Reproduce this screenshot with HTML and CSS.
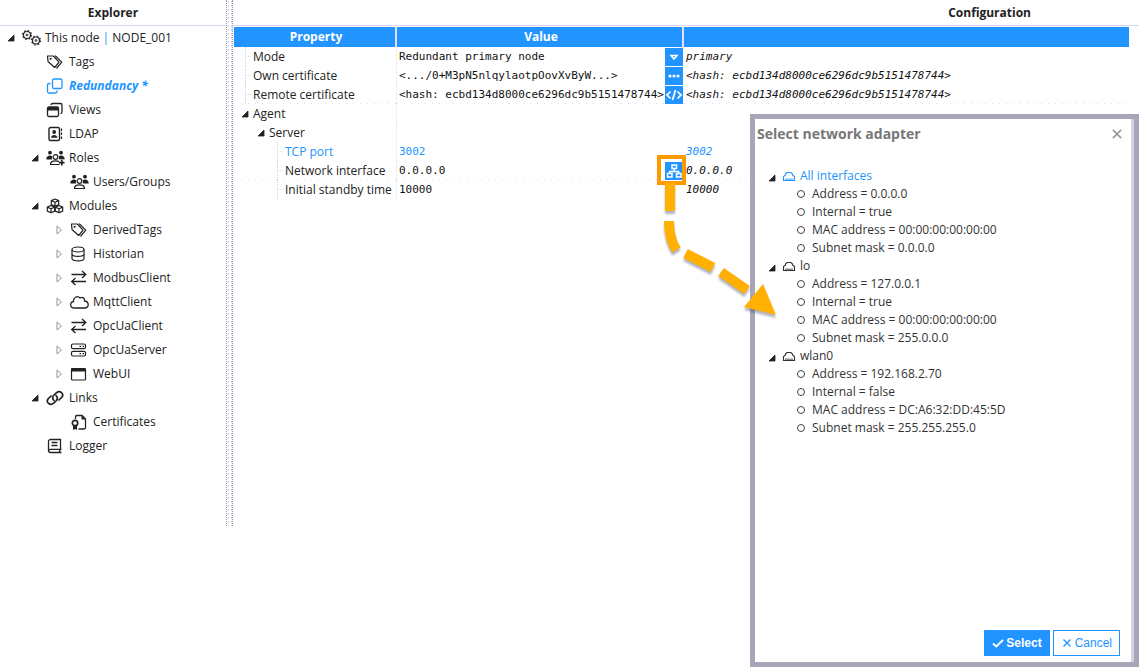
FILE: index.html
```html
<!DOCTYPE html>
<html lang="en">
<head>
<meta charset="utf-8">
<title>Configuration</title>
<link rel="stylesheet" href="styles.css">
</head>
<body>
<svg class="sprite" aria-hidden="true">
  <symbol id="open" viewBox="0 0 8 8"><path d="M7 1v6H1z" fill="#222" stroke="#222" stroke-width=".8"/></symbol>
  <symbol id="closed" viewBox="0 0 8 10"><path d="M2 1v8L6.500 5z" fill="#fff" stroke="#999"/></symbol>
  <symbol id="gears" viewBox="0 0 20 16"><g fill="none" stroke="currentColor"><circle cx="5" cy="5" r="3.500" stroke-width="1.200"/><circle cx="5" cy="5" r="4.500" stroke-width="1.200" stroke-dasharray="1.600 1.934"/><circle cx="5" cy="5" r=".9"/><circle cx="14" cy="10.500" r="3.500" stroke-width="1.200"/><circle cx="14" cy="10.500" r="4.500" stroke-width="1.200" stroke-dasharray="1.600 1.934"/><circle cx="14" cy="10.500" r=".9"/></g></symbol>
  <symbol id="tags" viewBox="0 0 20 16"><g fill="none" stroke="currentColor" stroke-width="1.200" stroke-linejoin="round" stroke-linecap="round"><path d="M1.500 2h5.800L13 8.200 8.700 13.500 2 7.500z"/><path d="M9.500 2l6.300 6.100-5 5.900"/><circle cx="4.600" cy="4.800" r=".5"/></g></symbol>
  <symbol id="copies" viewBox="0 0 20 16"><g fill="none" stroke="currentColor" stroke-width="1.300"><rect x="6.500" y="1" width="9.500" height="9.500" rx="1.500"/><path d="M4.500 5.500H3A1.500 1.500 0 0 0 1.500 7v6.500A1.500 1.500 0 0 0 3 15H9.500a1.500 1.500 0 0 0 1.500-1.500V12.500"/></g></symbol>
  <symbol id="windows" viewBox="0 0 20 16"><g fill="none" stroke="currentColor" stroke-width="1.300"><rect x="1.500" y="5" width="11" height="9.500" rx="1.500"/><path d="M5 3A1.500 1.500 0 0 1 6.500 1.500h8A1.500 1.500 0 0 1 16 3v7a1.500 1.500 0 0 1-1.500 1.500"/></g><path d="M1.500 5h11v3.500h-11z" fill="currentColor"/></symbol>
  <symbol id="contact" viewBox="0 0 20 16"><rect x="3" y="1.500" width="10.500" height="13" rx="1.500" fill="none" stroke="currentColor" stroke-width="1.400"/><circle cx="8.200" cy="6" r="1.900" fill="currentColor"/><path d="M5 11.800c0-3.800 6.400-3.800 6.400 0z" fill="currentColor"/><path d="M15.500 2.500V5M15.500 6.500V9M15.500 10.500V13" stroke="currentColor" stroke-width="1.200"/></symbol>
  <symbol id="users" viewBox="0 0 20 16"><g fill="currentColor"><circle cx="4" cy="2.700" r="1.900"/><circle cx="15" cy="2.700" r="1.900"/><path d="M.3 9.500c0-4.500 4.500-4.500 6-3L5.800 9.500zM18.700 9.500c0-4.500-4.500-4.500-6-3l.5 3z"/></g><g fill="none" stroke="currentColor" stroke-width="1.200"><circle cx="9.500" cy="7" r="2.300"/><path d="M4.500 14.500c0-4.800 10-4.800 10 0z"/></g></symbol>
  <symbol id="roles" viewBox="0 0 20 16"><use href="#users"/><path d="M12.700 9.700H19V16h-5z" fill="#fff"/><path d="M15.800 10v5.500M13 12.700h5.500" stroke="currentColor" stroke-width="1.700"/></symbol>
  <symbol id="modules" viewBox="0 0 20 16"><g fill="none" stroke="currentColor" stroke-width="1.200" stroke-linejoin="round"><path id="cube" d="M9 1l3.700 1.600v4L9 8.300 5.300 6.600v-4zM5.300 2.600L9 4.200l3.700-1.600M9 4.200v4"/><use href="#cube" x="-4" y="6.500"/><use href="#cube" x="4" y="6.500"/></g></symbol>
  <symbol id="database" viewBox="0 0 20 16"><g fill="none" stroke="currentColor" stroke-width="1.200"><ellipse cx="8" cy="3.500" rx="6" ry="2.500"/><path d="M2 3.500v9c0 3.200 12 3.200 12 0v-9M2 8c0 3.200 12 3.200 12 0"/></g></symbol>
  <symbol id="arrows" viewBox="0 0 20 16"><path d="M1.500 4.500h14M12 1l3.800 3.500L12 8M16 11.500H1.800M5.500 8l-3.800 3.500L5.500 15" fill="none" stroke="currentColor" stroke-width="1.300"/></symbol>
  <symbol id="cloud" viewBox="0 0 20 16"><path d="M4.500 14C-.3 14-.7 8.300 3.500 7.500 3 3.500 7.500 1.200 10 4c2.500-1.500 5 .2 4.500 3 4.700.5 5.200 7 0 7z" fill="none" stroke="currentColor" stroke-width="1.300"/></symbol>
  <symbol id="server" viewBox="0 0 20 16"><g fill="none" stroke="currentColor" stroke-width="1.200"><rect x="1.500" y="2" width="14" height="4.700" rx="1.500"/><rect x="1.500" y="9.300" width="14" height="4.700" rx="1.500"/><path d="M9.500 4.300H11M12.500 4.300H14M9.500 11.700H11M12.500 11.700H14"/></g></symbol>
  <symbol id="window" viewBox="0 0 20 16"><rect x="1.500" y="2.500" width="14" height="11.500" rx="1" fill="none" stroke="currentColor" stroke-width="1.200"/><path d="M1.500 2h14v3.500h-14z" fill="currentColor"/></symbol>
  <symbol id="link" viewBox="0 0 20 16"><g fill="none" stroke="currentColor" stroke-width="1.700" stroke-linecap="round"><path d="M8 10.500C6 8.500 6.500 6.500 8 5l2.300-2.200c3.800-3 8.200 1 5.500 4.500L13 10"/><path d="M10 5.500c2 2 1.500 4 0 5.500l-2.300 2.200C3.900 16.200-.5 12.200 2.200 8.700L5 6"/></g></symbol>
  <symbol id="certificate" viewBox="0 0 20 16"><g fill="none" stroke="currentColor" stroke-width="1.300"><path d="M5.500 5V3A1.500 1.500 0 0 1 7 1.500h5L15.500 5v8.500A1.500 1.500 0 0 1 14 15H8.500"/><circle cx="5" cy="9" r="2.700" stroke-width="1.700"/></g><path d="M11.500 1L16 5.500h-4.500zM3 11h4v5l-2-1-2 1z" fill="currentColor"/></symbol>
  <symbol id="book" viewBox="0 0 20 16"><path d="M14.500 11.500V1.500H4.500A2 2 0 0 0 2.500 3.500v9a2 2 0 0 0 2 2h11M2.700 12.500c0-.8 1-1.200 1.800-1.200h11M13.700 11.500v3M5.500 4.500h6M5.500 7.500h6" fill="none" stroke="currentColor" stroke-width="1.300"/></symbol>
  <symbol id="adapter" viewBox="0 0 14 12"><path d="M1.500 10.500V6.500L3.500 5V4L5 2.500h4L10.500 4v1l2 1.500v4zM4 10V8.500M6 10V8.500M8 10V8.500M10 10V8.500" fill="none" stroke="currentColor" stroke-width="1.100"/></symbol>
  <symbol id="drop" viewBox="0 0 18 18"><path d="M6 7.500h6L9 11z" fill="none" stroke="currentColor" stroke-width="1.500"/></symbol>
  <symbol id="dots" viewBox="0 0 18 18"><circle cx="5" cy="9" r="1.600"/><circle cx="9" cy="9" r="1.600"/><circle cx="13" cy="9" r="1.600"/></symbol>
  <symbol id="code" viewBox="0 0 18 18"><path d="M5.500 5.500L2 9l3.500 3.500M12.500 5.500L16 9l-3.500 3.500M10.500 4l-3 10" fill="none" stroke="currentColor" stroke-width="1.700"/></symbol>
  <symbol id="network" viewBox="0 0 18 18"><path d="M7 3h4.500v3.500H7zM2.500 11.500H7V15H2.500zM11.500 11.500H16V15h-4.500zM9.200 7v2.500M4.700 11.500v-2h9v2" fill="none" stroke="currentColor" stroke-width="1.500"/></symbol>
  <symbol id="check" viewBox="0 0 12 12"><path d="M1 6.500L4.300 9.500 11 3" fill="none" stroke="currentColor" stroke-width="2"/></symbol>
  <symbol id="cross" viewBox="0 0 12 12"><path d="M2.500 2.500l7 7M9.500 2.500l-7 7" fill="none" stroke="currentColor" stroke-width="1.400"/></symbol>
</svg>

<div class="app">
  <nav class="explorer">
    <h2 class="pane-title">Explorer</h2>
    <ul class="tree">
      <li>
        <div class="node"><svg class="arrow"><use href="#open"/></svg><svg class="icon"><use href="#gears"/></svg><span>This node <span class="bar">|</span> NODE_001</span></div>
        <ul>
          <li><div class="node leaf"><svg class="icon"><use href="#tags"/></svg>Tags</div></li>
          <li><div class="node leaf selected"><svg class="icon"><use href="#copies"/></svg>Redundancy *</div></li>
          <li><div class="node leaf"><svg class="icon"><use href="#windows"/></svg>Views</div></li>
          <li><div class="node leaf"><svg class="icon"><use href="#contact"/></svg>LDAP</div></li>
          <li>
            <div class="node"><svg class="arrow"><use href="#open"/></svg><svg class="icon"><use href="#roles"/></svg>Roles</div>
            <ul>
              <li><div class="node leaf"><svg class="icon"><use href="#users"/></svg>Users/Groups</div></li>
            </ul>
          </li>
          <li>
            <div class="node"><svg class="arrow"><use href="#open"/></svg><svg class="icon"><use href="#modules"/></svg>Modules</div>
            <ul>
              <li><div class="node"><svg class="arrow twisty"><use href="#closed"/></svg><svg class="icon"><use href="#tags"/></svg>DerivedTags</div></li>
              <li><div class="node"><svg class="arrow twisty"><use href="#closed"/></svg><svg class="icon"><use href="#database"/></svg>Historian</div></li>
              <li><div class="node"><svg class="arrow twisty"><use href="#closed"/></svg><svg class="icon"><use href="#arrows"/></svg>ModbusClient</div></li>
              <li><div class="node"><svg class="arrow twisty"><use href="#closed"/></svg><svg class="icon"><use href="#cloud"/></svg>MqttClient</div></li>
              <li><div class="node"><svg class="arrow twisty"><use href="#closed"/></svg><svg class="icon"><use href="#arrows"/></svg>OpcUaClient</div></li>
              <li><div class="node"><svg class="arrow twisty"><use href="#closed"/></svg><svg class="icon"><use href="#server"/></svg>OpcUaServer</div></li>
              <li><div class="node"><svg class="arrow twisty"><use href="#closed"/></svg><svg class="icon"><use href="#window"/></svg>WebUI</div></li>
            </ul>
          </li>
          <li>
            <div class="node"><svg class="arrow"><use href="#open"/></svg><svg class="icon"><use href="#link"/></svg>Links</div>
            <ul>
              <li><div class="node leaf"><svg class="icon"><use href="#certificate"/></svg>Certificates</div></li>
            </ul>
          </li>
          <li><div class="node leaf"><svg class="icon"><use href="#book"/></svg>Logger</div></li>
        </ul>
      </li>
    </ul>
  </nav>
  <div class="splitter"></div>
  <main class="configuration">
    <h2 class="pane-title config-title">Configuration</h2>
    <table class="props">
      <colgroup><col class="col-name"><col class="col-value"><col></colgroup>
      <thead><tr><th>Property</th><th>Value</th><th></th></tr></thead>
      <tbody>
        <tr><td><div class="name"><i class="rail"></i>Mode</div></td><td><div class="value">Redundant primary node<button class="edit" aria-label="Choose mode"><svg><use href="#drop"/></svg></button></div></td><td class="effective">primary</td></tr>
        <tr><td><div class="name"><i class="rail"></i>Own certificate</div></td><td><div class="value">&lt;.../0+M3pN5nlqylaotpOovXvByW...&gt;<button class="edit" aria-label="Edit own certificate"><svg><use href="#dots"/></svg></button></div></td><td class="effective">&lt;hash: ecbd134d8000ce6296dc9b5151478744&gt;</td></tr>
        <tr class="group-end"><td><div class="name"><i class="rail"></i>Remote certificate</div></td><td><div class="value">&lt;hash: ecbd134d8000ce6296dc9b5151478744&gt;<button class="edit" aria-label="Edit remote certificate"><svg><use href="#code"/></svg></button></div></td><td class="effective">&lt;hash: ecbd134d8000ce6296dc9b5151478744&gt;</td></tr>
        <tr><td><div class="name group"><svg class="arrow"><use href="#open"/></svg>Agent</div></td><td></td><td></td></tr>
        <tr><td><div class="name group sub"><svg class="arrow"><use href="#open"/></svg>Server</div></td><td></td><td></td></tr>
        <tr class="current"><td><div class="name deep"><i class="rail"></i>TCP port</div></td><td><div class="value">3002</div></td><td class="effective">3002</td></tr>
        <tr class="group-end"><td><div class="name deep"><i class="rail"></i>Network interface</div></td><td><div class="value">0.0.0.0<button class="edit" aria-label="Select network adapter"><svg><use href="#network"/></svg></button></div></td><td class="effective">0.0.0.0</td></tr>
        <tr><td><div class="name deep"><i class="rail"></i>Initial standby time</div></td><td><div class="value">10000</div></td><td class="effective">10000</td></tr>
      </tbody>
    </table>
  </main>
</div>

<section class="dialog" role="dialog" aria-labelledby="dialog-title">
  <div class="dialog-head">
    <h3 id="dialog-title">Select network adapter</h3>
    <button class="close" aria-label="Close"><svg><use href="#cross"/></svg></button>
  </div>
  <ul class="adapters">
    <li>
      <div class="adapter current"><svg class="arrow"><use href="#open"/></svg><svg class="port"><use href="#adapter"/></svg>All interfaces</div>
      <ul><li>Address = 0.0.0.0</li><li>Internal = true</li><li>MAC address = 00:00:00:00:00:00</li><li>Subnet mask = 0.0.0.0</li></ul>
    </li>
    <li>
      <div class="adapter"><svg class="arrow"><use href="#open"/></svg><svg class="port"><use href="#adapter"/></svg>lo</div>
      <ul><li>Address = 127.0.0.1</li><li>Internal = true</li><li>MAC address = 00:00:00:00:00:00</li><li>Subnet mask = 255.0.0.0</li></ul>
    </li>
    <li>
      <div class="adapter"><svg class="arrow"><use href="#open"/></svg><svg class="port"><use href="#adapter"/></svg>wlan0</div>
      <ul><li>Address = 192.168.2.70</li><li>Internal = false</li><li>MAC address = DC:A6:32:DD:45:5D</li><li>Subnet mask = 255.255.255.0</li></ul>
    </li>
  </ul>
  <div class="actions">
    <button class="btn primary"><svg><use href="#check"/></svg>Select</button>
    <button class="btn"><svg><use href="#cross"/></svg>Cancel</button>
  </div>
</section>

<svg class="callout" viewBox="0 0 150 190" aria-hidden="true">
  <rect x="19" y="17" width="25" height="26" fill="none" stroke="#ff9900" stroke-width="4"/>
  <g class="shaft">
    <path d="M30 43v28M29 81c0 11 2 21 7.500 29M45.500 113.500l27.500 14M81 132l26 18" fill="none" stroke="#ffb000" stroke-width="10"/>
    <path d="M123 144l13 31-32-8z" fill="#ffb000"/>
  </g>
</svg>
</body>
</html>
```

FILE: styles.css
```css
* { box-sizing: border-box; }
body {
  margin: 0;
  min-height: 100vh;
  position: relative;
  overflow: hidden;
  background: #fff;
  color: #222;
  font: 12px/18px "Open Sans", sans-serif;
}
ul { margin: 0; padding: 0; list-style: none; }
button { font: inherit; cursor: pointer; }
.sprite { position: absolute; width: 0; height: 0; }

.app { display: grid; grid-template-columns: 226px 7px minmax(0, 1fr); }
.pane-title {
  margin: 0;
  height: 26px;
  border-bottom: 1px solid #d8d8f4;
  font-size: 12px;
  line-height: 26px;
  text-align: center;
}
.config-title { text-align: right; padding-right: 108px; }

.explorer { padding-bottom: 68px; }
.tree ul { padding-left: 24px; }
.node {
  display: flex;
  align-items: center;
  height: 24px;
  padding-left: 7px;
  white-space: nowrap;
}
.node.leaf { padding-left: 21px; }
.arrow { width: 8px; height: 8px; flex: none; margin-right: 6px; }
.arrow.twisty { height: 10px; }
.icon { width: 20px; height: 16px; flex: none; margin: 0 3px 0 1px; }
.selected { color: #2294ff; font-weight: 700; font-style: italic; }
.bar { color: #2294ff; }

.splitter {
  border-left: 1px dotted #999;
  border-right: 1px dotted #999;
  background: radial-gradient(circle, #d0d0f4 0 1px, transparent 1px) 0 0 / 3px 4px;
}

.configuration { min-width: 0; }
.props {
  width: calc(100% - 11px);
  margin: 1px 10px 0 1px;
  border-spacing: 0;
  table-layout: fixed;
}
.col-name { width: 163px; }
.col-value { width: 287px; }
th {
  height: 20px;
  padding: 0 0 0 3px;
  color: #fff;
  font-size: 12px;
  line-height: 20px;
  background: #2294ff;
  border-right: 2px solid #e0e0fa;
}
th:last-child { border-right: 0; }
td { height: 19px; padding: 0; white-space: nowrap; vertical-align: top; }
td:first-child { border-right: 1px dotted #e0e0fa; }
.group-end td {
  background: repeating-linear-gradient(to right, #dcdcf8 0 1px, transparent 1px 7px) 0 100% / 100% 1px no-repeat;
}
.name { display: flex; align-items: center; height: 19px; padding-left: 11px; }
.name.deep { padding-left: 43px; }
.name.group { padding-left: 7px; }
.name.sub { padding-left: 23px; }
.name .arrow { margin-right: 4px; }
.rail {
  flex: none;
  width: 8px;
  height: 19px;
  border-left: 1px dotted #ccccf0;
  background: repeating-linear-gradient(to right, #dcdcf8 0 1px, transparent 1px 2px) 0 50% / 6px 1px no-repeat;
}
.value, .effective { font-family: "DejaVu Sans Mono", monospace; font-size: 11px; color: #111; }
.value { display: flex; justify-content: space-between; align-items: center; height: 19px; padding: 0 1px 0 2px; }
.effective { padding-left: 2px; line-height: 19px; font-style: italic; }
.edit {
  width: 18px;
  height: 18px;
  padding: 0;
  border: 0;
  background: #2294ff;
  color: #fff;
}
.edit svg { display: block; width: 18px; height: 18px; fill: currentColor; }
.current, .current .value, .current .effective { color: #2294ff; }

.dialog {
  position: absolute;
  top: 114px;
  right: 0;
  bottom: 0;
  width: 389px;
  display: flex;
  flex-direction: column;
  border: 5px solid #a6a6b6;
  background: #fff;
  box-shadow: inset -3px 0 #d2d2e6;
}
.dialog-head { display: flex; justify-content: space-between; align-items: center; height: 30px; padding: 0 10px 0 2px; }
.dialog-head h3 { margin: 0; font-size: 14px; color: #777; }
.close { padding: 0; border: 0; background: none; color: #999; }
.close svg { display: block; width: 14px; height: 14px; }
.adapters { flex: 1; padding: 18px 0 0 13px; color: #333; }
.adapters .arrow { margin: 4px 6px 0 0; }
.adapter { display: flex; align-items: center; height: 18px; }
.adapter.current { color: #2294ff; }
.port { width: 14px; height: 12px; margin-right: 4px; }
.adapters ul { padding-left: 29px; }
.adapters ul li { display: flex; align-items: center; gap: 7px; height: 18px; }
.adapters ul li::before { content: ""; width: 6px; height: 6px; border: 1px solid #444; border-radius: 50%; }
.actions { display: flex; justify-content: flex-end; gap: 3px; padding: 0 14px 6px 0; }
.btn {
  display: flex;
  align-items: center;
  gap: 2px;
  height: 26px;
  padding: 0 7px;
  border: 1px solid #2294ff;
  background: #fff;
  color: #2294ff;
  font: 12px "Liberation Sans", sans-serif;
}
.btn svg { width: 12px; height: 12px; }
.btn.primary { background: #2294ff; color: #fff; font-weight: 700; }

.callout { position: absolute; left: 640px; top: 140px; width: 150px; height: 190px; pointer-events: none; }
.shaft { filter: drop-shadow(0 3px 1px rgba(60, 60, 100, .4)); }
```
